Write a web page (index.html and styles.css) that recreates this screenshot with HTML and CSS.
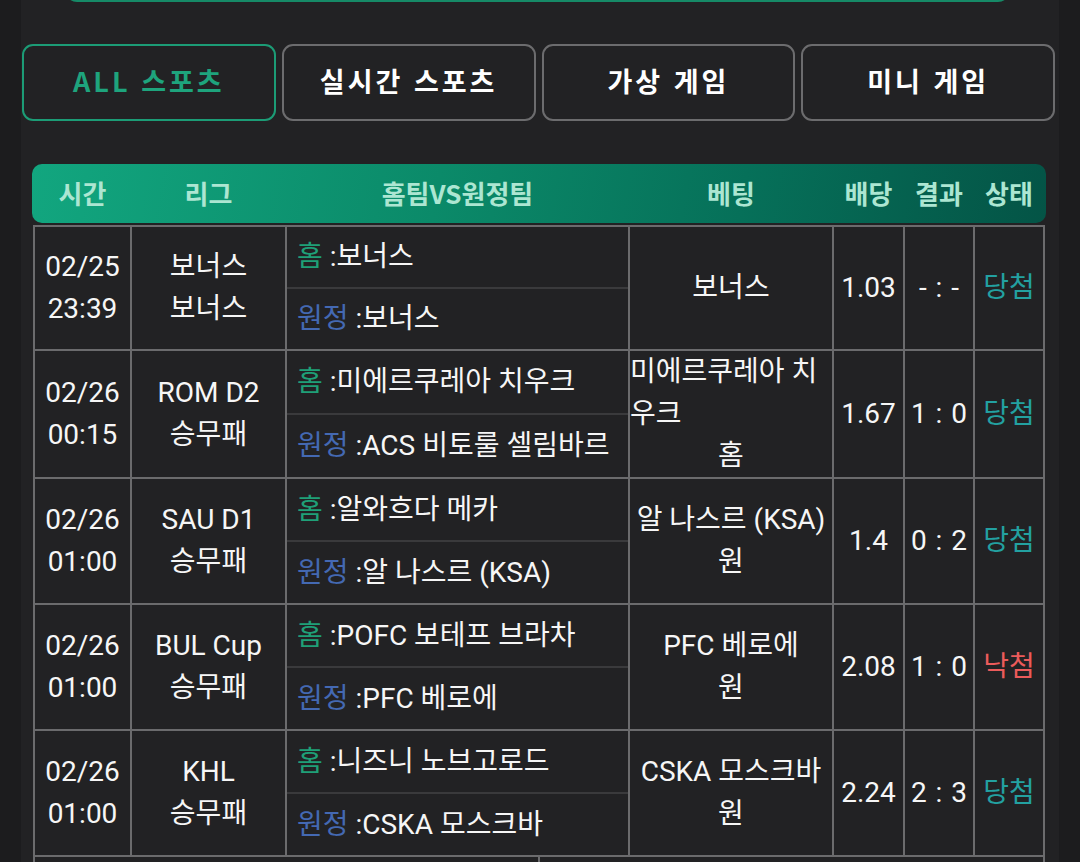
FILE: index.html
```html
<!DOCTYPE html>
<html lang="ko">
<head>
<meta charset="utf-8">
<title>베팅 내역</title>
<link rel="stylesheet" href="styles.css">
</head>
<body>
<div class="panel">
  <div class="topbox"></div>
  <nav class="tabs">
    <button class="tab active">ALL 스포츠</button>
    <button class="tab">실시간 스포츠</button>
    <button class="tab">가상 게임</button>
    <button class="tab">미니 게임</button>
  </nav>
  <div class="table">
    <div class="thead">
      <div>시간</div>
      <div>리그</div>
      <div>홈팀VS원정팀</div>
      <div>베팅</div>
      <div>배당</div>
      <div>결과</div>
      <div>상태</div>
    </div>
    <div class="tbody">
      <div class="cell">02/25<br>23:39</div>
      <div class="cell">보너스<br>보너스</div>
      <div class="cell teams"><div class="team"><span><span class="home">홈</span> :보너스</span></div><div class="team"><span><span class="away">원정</span> :보너스</span></div></div>
      <div class="cell bet"><span class="name">보너스</span></div>
      <div class="cell">1.03</div>
      <div class="cell result">- : -</div>
      <div class="cell win">당첨</div>

      <div class="cell">02/26<br>00:15</div>
      <div class="cell">ROM D2<br>승무패</div>
      <div class="cell teams"><div class="team"><span><span class="home">홈</span> :미에르쿠레아 치우크</span></div><div class="team"><span><span class="away">원정</span> :ACS 비토룰 셀림바르</span></div></div>
      <div class="cell bet"><span class="name">미에르쿠레아 치우크</span><br>홈</div>
      <div class="cell">1.67</div>
      <div class="cell result">1 : 0</div>
      <div class="cell win">당첨</div>

      <div class="cell">02/26<br>01:00</div>
      <div class="cell">SAU D1<br>승무패</div>
      <div class="cell teams"><div class="team"><span><span class="home">홈</span> :알와흐다 메카</span></div><div class="team"><span><span class="away">원정</span> :알 나스르 (KSA)</span></div></div>
      <div class="cell bet"><span class="name">알 나스르 (KSA)</span><br>원</div>
      <div class="cell">1.4</div>
      <div class="cell result">0 : 2</div>
      <div class="cell win">당첨</div>

      <div class="cell">02/26<br>01:00</div>
      <div class="cell">BUL Cup<br>승무패</div>
      <div class="cell teams"><div class="team"><span><span class="home">홈</span> :POFC 보테프 브라차</span></div><div class="team"><span><span class="away">원정</span> :PFC 베로에</span></div></div>
      <div class="cell bet"><span class="name">PFC 베로에</span><br>원</div>
      <div class="cell">2.08</div>
      <div class="cell result">1 : 0</div>
      <div class="cell lose">낙첨</div>

      <div class="cell">02/26<br>01:00</div>
      <div class="cell">KHL<br>승무패</div>
      <div class="cell teams"><div class="team"><span><span class="home">홈</span> :니즈니 노브고로드</span></div><div class="team"><span><span class="away">원정</span> :CSKA 모스크바</span></div></div>
      <div class="cell bet"><span class="name">CSKA 모스크바</span><br>원</div>
      <div class="cell">2.24</div>
      <div class="cell result">2 : 3</div>
      <div class="cell win">당첨</div>
    </div>
    <div class="tfoot">
      <div class="fcell"></div>
      <div class="fcell"></div>
    </div>
  </div>
</div>
</body>
</html>
```

FILE: styles.css
```css
* { box-sizing: border-box; }
html, body { margin: 0; padding: 0; }
body {
  background: #1c1c1e;
  font-family: Roboto, "Noto Sans CJK KR", sans-serif;
  color: #f6f6f6;
}
.panel {
  margin: 0 21px;
  width: 1038px;
  min-height: 862px;
  background: #222224;
  overflow: hidden;
}
.topbox {
  margin: -38px 0 0 44px;
  width: 945px;
  height: 40px;
  border: 2px solid #168a67;
  border-radius: 12px;
}
.tabs {
  display: grid;
  grid-template-columns: repeat(4, 1fr);
  gap: 6px;
  margin: 42px 4px 0 1px;
}
.tab {
  height: 77px;
  background: transparent;
  border: 2px solid #6c6c6e;
  border-radius: 11px;
  color: #ffffff;
  font-family: "Noto Sans CJK KR", sans-serif;
  font-weight: 700;
  font-size: 27px;
  letter-spacing: 3px;
  padding: 0 0 5px;
}
.tab.active {
  border-color: #1c9c76;
  color: #1ea47d;
}
.table {
  margin: 43px 0 0 11px;
  width: 1014px;
}
.thead {
  display: grid;
  grid-template-columns: 95px 153px 341px 202px 69px 68px 68px;
  column-gap: 2px;
  padding: 0 3px 3px;
  height: 59px;
  border-radius: 10px;
  background: linear-gradient(100deg, #12a67f 0%, #0b8a69 40%, #067059 70%, #045446 100%);
  color: #ace6d2;
  font-family: "Noto Sans CJK KR", sans-serif;
  font-weight: 700;
  font-size: 26px;
  margin-bottom: 2px;
}
.thead div {
  display: flex;
  align-items: center;
  justify-content: center;
}
.tbody {
  margin-left: 1px;
  width: 1012px;
  display: grid;
  grid-template-columns: 95px 153px 341px 202px 69px 68px 68px;
  grid-template-rows: 122px;
  grid-auto-rows: minmax(124px, auto);
  gap: 2px;
  padding: 2px;
  background: #6b6b6d;
}
.cell {
  background: #222224;
  display: flex;
  flex-direction: column;
  justify-content: center;
  align-items: center;
  text-align: center;
  font-size: 28px;
  line-height: 42px;
}
.cell.result {
  word-spacing: 2px;
  white-space: nowrap;
}
.cell.bet {
  display: block;
  align-content: center;
}
.bet .name {
  display: inline-block;
  text-align: left;
}
.cell.teams {
  align-items: stretch;
  justify-content: stretch;
}
.team {
  flex: 1;
  display: flex;
  align-items: center;
  padding-left: 10px;
  text-align: left;
  white-space: nowrap;
}
.team + .team {
  border-top: 2px solid #3a3a3c;
}
.home { color: #1fa078; }
.away { color: #4469b3; }
.win { color: #23a1a1; }
.lose { color: #ec5b5b; }
.tfoot {
  margin-left: 1px;
  width: 1012px;
  display: grid;
  grid-template-columns: 1fr 1fr;
  gap: 2px;
  padding: 0 2px 2px;
  background: #6b6b6d;
}
.fcell {
  height: 60px;
  background: #222224;
}
```
